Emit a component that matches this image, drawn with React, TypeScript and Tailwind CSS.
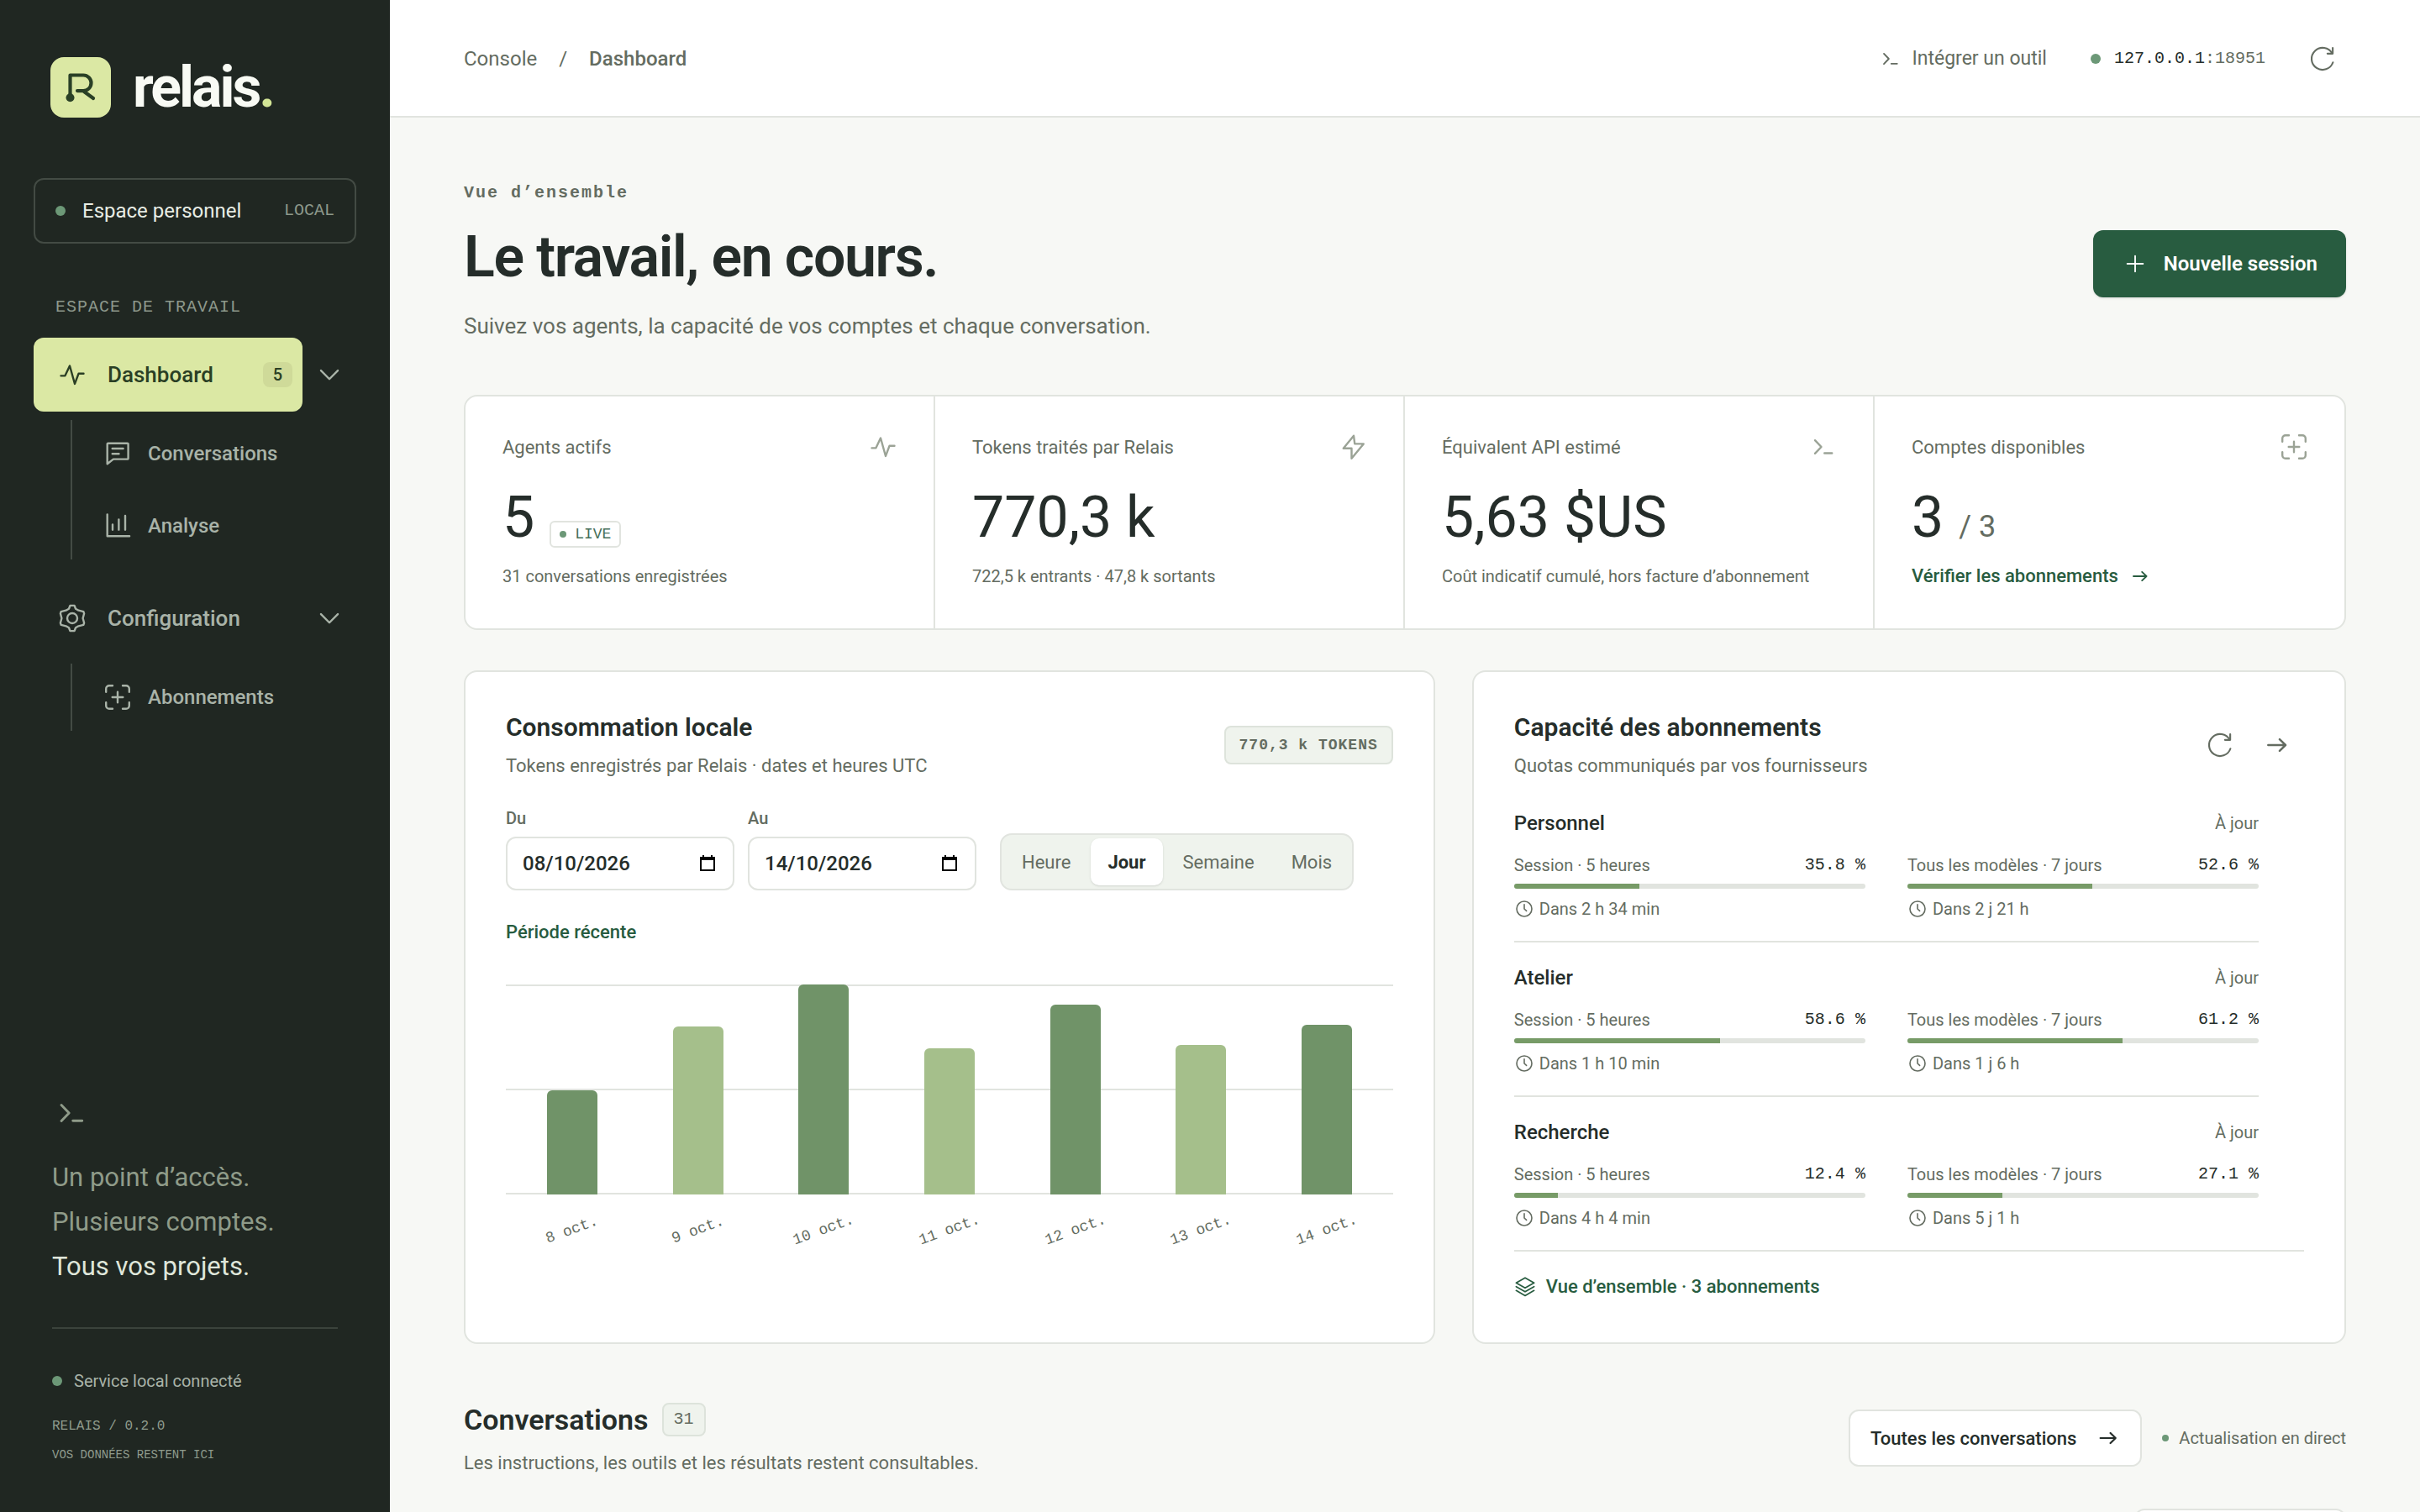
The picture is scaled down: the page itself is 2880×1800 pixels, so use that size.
import type { ReactNode } from "react";
import clsx from "clsx";

const mono = "font-['Liberation_Mono',monospace]";

const icons: Record<string, ReactNode> = {
  pulse: <path d="M3 12.9h3.3L10 5l4 14.3 3-8.1h4" />,
  message: (
    <>
      <path d="M3.8 20.2V4.4a.6.6 0 0 1 .6-.6h15.4a.6.6 0 0 1 .6.6v11.4a.6.6 0 0 1-.6.6H8.6z" />
      <path d="M7.8 8h8.6M7.8 12.2H13" />
    </>
  ),
  chart: <path d="M3.8 2.9v17.3h17.6M8 10.9v4.2M12.9 6.9v8.2M18 4v11.1" />,
  gear: (
    <>
      <circle cx="12" cy="12" r="4" />
      <path d="M10.3 1.9h3.4l1 2.6 2.3 1.3 3.9.9.5 1.6-1 3.7 1 3.7-.5 1.6-3.9.9-2.3 1.3-1 2.6h-3.4l-1-2.6L7 18.2l-3.9-.9-.5-1.6 1-3.7-1-3.7.5-1.6L7 5.8l2.3-1.3z" />
    </>
  ),
  scan: (
    <path d="M2.8 7.8V5.3a2.5 2.5 0 0 1 2.5-2.5H8M16 2.8h2.7a2.5 2.5 0 0 1 2.5 2.5v2.5M21.2 16.2v2.5a2.5 2.5 0 0 1-2.5 2.5H16M8 21.2H5.3a2.5 2.5 0 0 1-2.5-2.5v-2.5M12 7.8v8.4M7.8 12h8.4" />
  ),
  terminal: <path d="M6 6.8l5 5.2-5 5.2M13.5 17h6" />,
  refresh: (
    <>
      <path d="M21.3 15.2A9.8 9.8 0 1 1 20.6 7.2" />
      <path d="M16.4 7.4h4.7V2.3" />
    </>
  ),
  bolt: <path d="M12.7 3.2 4.5 13.2H11V21.2L20.5 9.6h-7z" />,
  arrow: <path strokeWidth="1.9" d="M4 12h15.5M14.2 6.9l5.3 5.1-5.3 5.1" />,
  plus: <path d="M4 12h16M12 4v16" />,
  chevron: <path d="M5.3 8.7l6.7 6.8 6.7-6.8" />,
  clock: (
    <>
      <circle cx="12" cy="12" r="9" />
      <path d="M12 6.8V12l2.6 2.4" />
    </>
  ),
  layers: (
    <path d="M12 2 21.8 7.6 12 13.2 2.2 7.6zM2.2 11.8 12 17.4l9.8-5.6M2.2 16 12 21.6l9.8-5.6" />
  ),
};

function Icon({ name, className }: { name: string; className?: string }) {
  return (
    <svg
      viewBox="0 0 24 24"
      fill="none"
      stroke="currentColor"
      strokeWidth="1.6"
      strokeLinecap="round"
      strokeLinejoin="round"
      aria-hidden="true"
      className={clsx("shrink-0", className)}
    >
      {icons[name]}
    </svg>
  );
}

function SubItem({ icon, label }: { icon: string; label: string }) {
  return (
    <a href="#" className="flex h-20 items-center gap-[18px] pl-9 text-2xl font-medium">
      <Icon name={icon} className="size-9" />
      {label}
    </a>
  );
}

function Sidebar() {
  return (
    <aside className="flex w-[464px] shrink-0 flex-col bg-[#202722] px-10 pt-[68px] pb-[58px] text-[#a9b3a8]">
      <a href="#" className="flex h-[72px] items-center gap-[26px] pl-5">
        <svg viewBox="0 0 72 72" className="size-[72px]" aria-hidden="true">
          <rect width="72" height="72" rx="16" fill="#dbe8a4" />
          <path
            d="M23.5 48V21.5h15.7a9.3 9.3 0 0 1 0 18.6H32M40 41l11 8"
            fill="none"
            stroke="#2a4026"
            strokeWidth="4.2"
            strokeLinecap="round"
            strokeLinejoin="round"
          />
          <circle cx="23.5" cy="48.3" r="5" fill="#2a4026" />
        </svg>
        <span className="text-[68px] leading-[72px] font-bold tracking-[-3px] text-[#f8faf4]">
          relais<span className="text-[#d3e596]">.</span>
        </span>
      </a>

      <button className="mt-[72px] flex h-[78px] items-center rounded-xl border-2 border-[#434b44] px-6 text-left">
        <span className="size-3 rounded-full bg-[#6c9877]" />
        <span className="ml-5 text-2xl text-[#e8ede5]">Espace personnel</span>
        <span className={clsx(mono, "ml-auto text-xl text-[#8d988b]")}>LOCAL</span>
      </button>

      <p className={clsx(mono, "mt-16 pl-[26px] text-xl leading-6 tracking-[1px] text-[#8d988b]")}>
        ESPACE DE TRAVAIL
      </p>

      <nav className="mt-6">
        <div className="flex items-center">
          <a
            href="#"
            className="flex h-[88px] flex-1 items-center rounded-xl bg-[#dbe8a4] pr-3 pl-7 text-[26px] font-medium text-[#2a3f24]"
          >
            <Icon name="pulse" className="size-9" />
            <span className="ml-6">Dashboard</span>
            <span className="ml-auto rounded-lg bg-[#cfda99] px-3 text-xl leading-[30px]">5</span>
          </a>
          <button aria-label="Replier Dashboard" className="flex w-16 justify-center">
            <Icon name="chevron" className="size-9" />
          </button>
        </div>
        <div className="mt-2.5 ml-11 flex flex-col gap-1.5 border-l-2 border-[#434b44]">
          <SubItem icon="message" label="Conversations" />
          <SubItem icon="chart" label="Analyse" />
        </div>
        <div className="mt-[26px] flex items-center">
          <a href="#" className="flex h-[88px] flex-1 items-center pl-7 text-[26px] font-medium">
            <Icon name="gear" className="size-9" />
            <span className="ml-6">Configuration</span>
          </a>
          <button aria-label="Replier Configuration" className="flex w-16 justify-center">
            <Icon name="chevron" className="size-9" />
          </button>
        </div>
        <div className="mt-2.5 ml-11 border-l-2 border-[#434b44]">
          <SubItem icon="scan" label="Abonnements" />
        </div>
      </nav>

      <div className="mt-auto px-[22px]">
        <Icon name="terminal" className="size-11 text-[#8f9b89]" />
        <p className="mt-7 text-[31px] leading-[53px] text-[#8f9b89]">
          Un point d’accès.
          <br />
          Plusieurs comptes.
          <br />
          <span className="text-[#dfe6da]">Tous vos projets.</span>
        </p>
        <div className="mt-[46px] border-t-2 border-[#3b433c] pt-12">
          <p className="flex items-center gap-3.5 text-xl leading-7">
            <span className="size-3 rounded-full bg-[#6c9877]" />
            Service local connecté
          </p>
          <p className={clsx(mono, "mt-7 text-base leading-6 text-[#8f9b8d]")}>RELAIS / 0.2.0</p>
          <p className={clsx(mono, "mt-3 text-sm leading-5 text-[#8f9b8d]")}>
            VOS DONNÉES RESTENT ICI
          </p>
        </div>
      </div>
    </aside>
  );
}

function TopBar() {
  return (
    <header className="flex h-[140px] shrink-0 items-center justify-between border-b-2 border-[#e1e4df] bg-white px-[88px] pt-0.5 text-[#646c61]">
      <nav aria-label="Fil d’Ariane" className="flex gap-[26px] text-2xl">
        <a href="#">Console</a>
        <span>/</span>
        <a href="#" className="font-medium">
          Dashboard
        </a>
      </nav>
      <div className="flex items-center">
        <a href="#" className="flex items-center gap-3 text-[23px]">
          <Icon name="terminal" className="size-7" />
          Intégrer un outil
        </a>
        <span className="ml-[52px] size-3 rounded-full bg-[#6c9877]" />
        <span className={clsx(mono, "ml-4 text-xl")}>
          <span className="text-[#252d2a]">127.0.0.1</span>:18951
        </span>
        <button aria-label="Actualiser" className="ml-10 flex size-14 items-center justify-center">
          <Icon name="refresh" className="size-8" />
        </button>
      </div>
    </header>
  );
}

function Stat({
  label,
  icon,
  value,
  children,
}: {
  label: string;
  icon: string;
  value: ReactNode;
  children: ReactNode;
}) {
  return (
    <div className="border-r-2 border-[#e1e4df] pt-[42px] pr-[42px] pb-12 pl-11 last:border-r-0">
      <div className="flex h-9 items-center justify-between text-[22px]">
        {label}
        <Icon name={icon} className="size-9 text-[#9ba396]" />
      </div>
      <div className="mt-[30px] flex h-[72px] items-baseline text-[68px] leading-[72px] text-[#252d2a]">
        {value}
      </div>
      <div className="mt-5 h-7 text-xl leading-7">{children}</div>
    </div>
  );
}

function Stats() {
  return (
    <section className="mt-[60px] grid grid-cols-4 rounded-2xl border-2 border-[#e1e4df] bg-white">
      <Stat
        label="Agents actifs"
        icon="pulse"
        value={
          <>
            5
            <span
              className={clsx(
                mono,
                "ml-[18px] flex h-8 items-center gap-2.5 self-end rounded-md border-2 border-[#e1e4df] px-2.5 text-[18px] leading-6 text-[#47705a]",
              )}
            >
              <span className="size-2 rounded-full bg-[#6c9877]" />
              LIVE
            </span>
          </>
        }
      >
        31 conversations enregistrées
      </Stat>
      <Stat label="Tokens traités par Relais" icon="bolt" value="770,3 k">
        722,5 k entrants · 47,8 k sortants
      </Stat>
      <Stat label="Équivalent API estimé" icon="terminal" value="5,63 $US">
        Coût indicatif cumulé, hors facture d’abonnement
      </Stat>
      <Stat
        label="Comptes disponibles"
        icon="scan"
        value={
          <>
            3<span className="ml-[18px] text-[36px] leading-10 text-[#646c61]">/ 3</span>
          </>
        }
      >
        <a href="#" className="flex items-center gap-3.5 text-[22px] font-medium text-[#285c40]">
          Vérifier les abonnements
          <Icon name="arrow" className="size-6" />
        </a>
      </Stat>
    </section>
  );
}

function DateField({ id, label, value }: { id: string; label: string; value: string }) {
  return (
    <div className="w-[272px]">
      <label htmlFor={id} className="block text-xl leading-6 font-medium">
        {label}
      </label>
      <div className="mt-2.5 flex h-16 items-center rounded-xl border-2 border-[#e1e4df] bg-white pr-5 pl-[18px]">
        <input
          id={id}
          defaultValue={value}
          className="w-full min-w-0 flex-1 text-2xl font-medium text-[#252d2a] outline-none"
        />
        <svg viewBox="0 0 20 20" className="size-5 shrink-0 text-black" aria-hidden="true">
          <path d="M2 3h16v15H2z" fill="none" stroke="currentColor" strokeWidth="2" />
          <path d="M1 2h18v4H1zM4 0h2v3H4zM14 0h2v3h-2z" fill="currentColor" />
        </svg>
      </div>
    </div>
  );
}

const days = [
  { label: "8 oct.", pct: 49.6 },
  { label: "9 oct.", pct: 80 },
  { label: "10 oct.", pct: 100 },
  { label: "11 oct.", pct: 69.6 },
  { label: "12 oct.", pct: 90.4 },
  { label: "13 oct.", pct: 71.2 },
  { label: "14 oct.", pct: 80.8 },
];

const ranges = ["Heure", "Jour", "Semaine", "Mois"];

function Usage() {
  return (
    <section className="rounded-2xl border-2 border-[#e1e4df] bg-white px-12 pt-12 pb-[52px]">
      <div className="flex items-center justify-between">
        <div>
          <h2 className="text-[30px] leading-9 font-semibold text-[#252d2a]">
            Consommation locale
          </h2>
          <p className="mt-3.5 text-[22px] leading-7">
            Tokens enregistrés par Relais · dates et heures UTC
          </p>
        </div>
        <span
          className={clsx(
            mono,
            "rounded-lg border-2 border-[#dde3db] bg-[#eff3ed] px-4 text-[18px] leading-[42px] font-bold tracking-[1px]",
          )}
        >
          770,3 k TOKENS
        </span>
      </div>

      <div className="mt-9 flex items-end">
        <div className="flex gap-4">
          <DateField id="from" label="Du" value="08/10/2026" />
          <DateField id="to" label="Au" value="14/10/2026" />
        </div>
        <div className="ml-7 flex h-[68px] gap-1 rounded-[14px] border-2 border-[#e1e4df] bg-[#eff3ed] p-1">
          {ranges.map((range) => (
            <button
              key={range}
              className={clsx(
                "rounded-[10px] px-5 text-[22px]",
                range === "Jour" && "bg-white font-bold text-[#252d2a] shadow-sm",
              )}
            >
              {range}
            </button>
          ))}
        </div>
      </div>

      <a href="#" className="mt-9 block text-[22px] leading-7 font-medium text-[#285c40]">
        Période récente
      </a>

      <div className="mt-12 grid h-[250px]">
        <div className="col-start-1 row-start-1 flex flex-col justify-between">
          <div className="h-0.5 bg-[#e1e4df]" />
          <div className="h-0.5 bg-[#e1e4df]" />
          <div className="h-0.5 bg-[#e1e4df]" />
        </div>
        <div className="col-start-1 row-start-1 grid grid-cols-7 items-end justify-items-center px-1">
          {days.map((day, i) => (
            <div
              key={day.label}
              className={clsx("w-[60px] rounded-t-md", i % 2 ? "bg-[#a5bf8b]" : "bg-[#709368]")}
              style={{ height: `${day.pct}%` }}
            />
          ))}
        </div>
      </div>
      <div className={clsx(mono, "mt-[30px] grid grid-cols-7 justify-items-center px-1 text-[18px] leading-6")}>
        {days.map((day) => (
          <span key={day.label} className="-rotate-20">
            {day.label}
          </span>
        ))}
      </div>
    </section>
  );
}

const accounts = [
  { name: "Personnel", session: 35.8, sessionReset: "Dans 2 h 34 min", week: 52.6, weekReset: "Dans 2 j 21 h" },
  { name: "Atelier", session: 58.6, sessionReset: "Dans 1 h 10 min", week: 61.2, weekReset: "Dans 1 j 6 h" },
  { name: "Recherche", session: 12.4, sessionReset: "Dans 4 h 4 min", week: 27.1, weekReset: "Dans 5 j 1 h" },
];

function Quota({ label, value, reset }: { label: string; value: number; reset: string }) {
  return (
    <div className="text-xl leading-6">
      <div className="flex justify-between">
        {label}
        <span className={clsx(mono, "text-[#252d2a]")}>{value} %</span>
      </div>
      <div className="mt-2.5 h-1.5 overflow-hidden rounded-full bg-[#e1e4df]">
        <div className="h-full bg-[#779b67]" style={{ width: `${value}%` }} />
      </div>
      <div className="mt-3 flex items-center gap-1.5">
        <Icon name="clock" className="size-6" />
        {reset}
      </div>
    </div>
  );
}

function Capacity() {
  return (
    <section className="rounded-2xl border-2 border-[#e1e4df] bg-white px-12 pt-12 pb-[52px]">
      <div className="flex items-center justify-between">
        <div>
          <h2 className="text-[30px] leading-9 font-semibold text-[#252d2a]">
            Capacité des abonnements
          </h2>
          <p className="mt-3.5 text-[22px] leading-7">Quotas communiqués par vos fournisseurs</p>
        </div>
        <div className="flex gap-1">
          <button aria-label="Actualiser les quotas" className="flex size-16 items-center justify-center">
            <Icon name="refresh" className="size-8" />
          </button>
          <a href="#" aria-label="Ouvrir les abonnements" className="flex size-16 items-center justify-center">
            <Icon name="arrow" className="size-8" />
          </a>
        </div>
      </div>

      <div className="mt-3 pr-[54px]">
        {accounts.map((account) => (
          <div key={account.name} className="border-b-2 border-[#e1e4df] pt-7 pb-[26px] last:border-b-0">
            <div className="flex items-center justify-between text-xl leading-7">
              <h3 className="text-2xl leading-7 font-medium text-[#252d2a]">{account.name}</h3>
              À jour
            </div>
            <div className="mt-6 grid grid-cols-2 gap-[50px]">
              <Quota label="Session · 5 heures" value={account.session} reset={account.sessionReset} />
              <Quota label="Tous les modèles · 7 jours" value={account.week} reset={account.weekReset} />
            </div>
          </div>
        ))}
      </div>

      <div className="border-t-2 border-[#e1e4df] pt-7">
        <a href="#" className="flex items-center gap-3 text-[22px] leading-7 font-medium text-[#285c40]">
          <Icon name="layers" className="size-[26px]" />
          Vue d’ensemble · 3 abonnements
        </a>
      </div>
    </section>
  );
}

export default function App() {
  return (
    <div className="flex h-screen overflow-hidden bg-[#f7f8f5] font-[Roboto,sans-serif] text-[#646c61]">
      <Sidebar />
      <div className="flex min-w-0 flex-1 flex-col">
        <TopBar />
        <main className="min-h-0 flex-1 overflow-hidden px-[88px] pt-[78px]">
          <div className="flex items-center justify-between">
            <div className="pb-1">
              <p className={clsx(mono, "text-xl leading-6 font-bold tracking-[2px]")}>Vue d’ensemble</p>
              <h1 className="mt-7 text-[68px] leading-[72px] font-semibold tracking-[-0.02em] text-[#252d2a]">
                Le travail, en cours.
              </h1>
              <p className="mt-7 text-[26px] leading-9">
                Suivez vos agents, la capacité de vos comptes et chaque conversation.
              </p>
            </div>
            <button className="flex h-20 items-center gap-5 rounded-xl bg-[#285c40] pr-[34px] pl-9 text-2xl font-semibold text-white shadow-sm">
              <Icon name="plus" className="size-7" />
              Nouvelle session
            </button>
          </div>

          <Stats />

          <div className="mt-12 grid grid-cols-[10fr_9fr] gap-11">
            <Usage />
            <Capacity />
          </div>

          <div className="mt-[68px] flex items-center justify-between">
            <div>
              <div className="flex items-center gap-4">
                <h2 className="text-[34px] leading-11 font-semibold text-[#252d2a]">
                  Conversations
                </h2>
                <span
                  className={clsx(
                    mono,
                    "rounded-lg border-2 border-[#dde3db] bg-[#eff3ed] px-3 text-xl leading-9",
                  )}
                >
                  31
                </span>
              </div>
              <p className="mt-4 text-[22px] leading-7">
                Les instructions, les outils et les résultats restent consultables.
              </p>
            </div>
            <div className="flex items-center gap-6">
              <a
                href="#"
                className="flex h-[68px] items-center gap-6 rounded-xl border-2 border-[#e1e4df] bg-white px-6 text-[22px] font-medium text-[#252d2a]"
              >
                Toutes les conversations
                <Icon name="arrow" className="size-7" />
              </a>
              <span className="flex items-center gap-3 text-xl">
                <span className="size-2 rounded-full bg-[#6c9877]" />
                Actualisation en direct
              </span>
            </div>
          </div>

          <div className="mt-10 flex justify-end">
            <select
              aria-label="Filtrer les conversations"
              className="h-16 w-[252px] rounded-xl border-2 border-[#e1e4df] bg-white px-5 text-[22px]"
            >
              <option>Tous les agents</option>
            </select>
          </div>
        </main>
      </div>
    </div>
  );
}
